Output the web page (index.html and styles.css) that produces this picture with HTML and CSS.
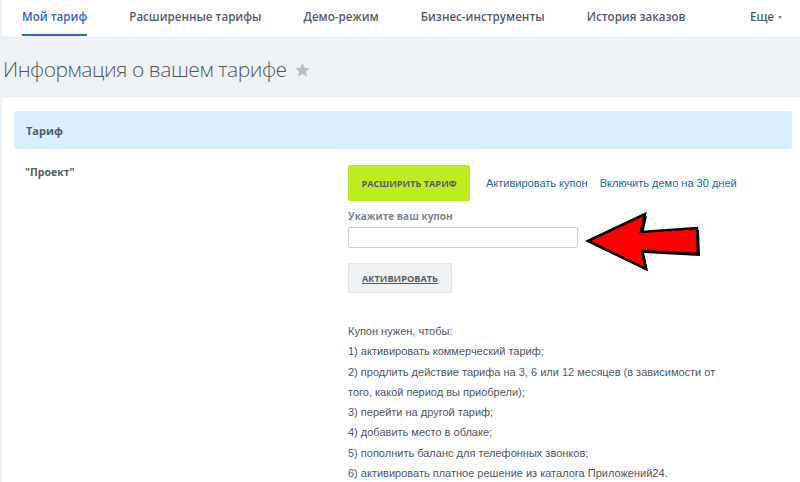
FILE: index.html
```html
<!DOCTYPE html>
<html lang="ru">
<head>
    <meta charset="UTF-8">
    <title>Информация о вашем тарифе</title>
    <link rel="stylesheet" href="styles.css">
</head>
<body>
    <div class="page">
        <div class="topnav">
            <a class="nav-item active">Мой тариф</a>
            <a class="nav-item">Расширенные тарифы</a>
            <a class="nav-item">Демо-режим</a>
            <a class="nav-item">Бизнес-инструменты</a>
            <a class="nav-item">История заказов</a>
            <a class="nav-item more">Еще <span class="caret"></span></a>
        </div>

        <div class="title-row">
            <h1 class="title">Информация о вашем тарифе</h1>
            <svg class="star" width="15" height="14" viewBox="0 0 24 23">
                <path d="M12 0l3.5 7.6 8.3.9-6.2 5.6 1.8 8.2L12 18.1l-7.4 4.2 1.8-8.2L.2 8.5l8.3-.9z" fill="#b9bfc6"/>
            </svg>
        </div>

        <div class="card">
            <div class="card-head">Тариф</div>

            <div class="tariff-row">
                <div class="tariff-name">"Проект"</div>
                <div class="tariff-actions">
                    <div class="action-line">
                        <button class="btn-extend">РАСШИРИТЬ ТАРИФ</button>
                        <a class="link">Активировать купон</a>
                        <a class="link">Включить демо на 30 дней</a>
                    </div>

                    <label class="coupon-label">Укажите ваш купон</label>
                    <div class="coupon-field">
                        <input class="coupon-input" type="text">
                        <!-- annotation arrow -->
                        <svg class="arrow" width="122" height="64" viewBox="0 0 122 64">
                            <path d="M4 30 L61 3 L57 21 L113 17 L114 43 L58 40 L62 58 Z" fill="#000" transform="translate(2 2)"/>
                            <path d="M4 30 L61 3 L57 21 L113 17 L114 43 L58 40 L62 58 Z" fill="#ff0000" stroke="#000" stroke-width="2.5" stroke-linejoin="miter"/>
                        </svg>
                    </div>

                    <button class="btn-activate">АКТИВИРОВАТЬ</button>

                    <div class="coupon-info">
                        <p>Купон нужен, чтобы:</p>
                        <p>1) активировать коммерческий тариф;</p>
                        <p>2) продлить действие тарифа на 3, 6 или 12 месяцев (в зависимости от того, какой период вы приобрели);</p>
                        <p>3) перейти на другой тариф;</p>
                        <p>4) добавить место в облаке;</p>
                        <p>5) пополнить баланс для телефонных звонков;</p>
                        <p>6) активировать платное решение из каталога Приложений24.</p>
                    </div>
                </div>
            </div>
        </div>
    </div>
</body>
</html>
```

FILE: styles.css
```css
* {
    margin: 0;
    padding: 0;
    box-sizing: border-box;
}

body {
    font-family: 'Open Sans', 'Liberation Sans', sans-serif;
    background: #eef2f4;
    color: #535c69;
    overflow: hidden;
}

.page {
    padding-left: 2px;
}

.topnav {
    background: #fff;
    height: 36px;
    display: flex;
    align-items: stretch;
    padding-left: 20px;
}

.nav-item {
    font-size: 11.6px;
    font-weight: 600;
    color: #525c69;
    display: flex;
    align-items: center;
    padding-bottom: 2px;
    margin-right: 42px;
    border-bottom: 2px solid transparent;
    white-space: nowrap;
}

.nav-item.active {
    color: #2f64d0;
    border-bottom-color: #2f64d0;
}

.nav-item.more {
    margin-left: auto;
    margin-right: 18px;
}

.caret {
    display: inline-block;
    width: 0;
    height: 0;
    border-left: 2px solid transparent;
    border-right: 2px solid transparent;
    border-top: 3px solid #7d858f;
    margin-left: 4px;
    margin-top: 2px;
}

.title-row {
    display: flex;
    align-items: center;
    height: 62px;
    padding-left: 1px;
    padding-top: 3px;
}

.title {
    font-size: 21px;
    font-weight: 300;
    color: #4f5763;
    letter-spacing: -0.45px;
}

.star {
    margin-left: 8px;
    margin-top: 3px;
}

.card {
    background: #fff;
    padding: 13px 8px 0 12px;
    min-height: 400px;
}

.card-head {
    background: #d7f0fb;
    height: 38px;
    display: flex;
    align-items: center;
    padding-left: 12px;
    font-size: 11px;
    font-weight: 700;
    color: #535c69;
    border-radius: 2px;
}

.tariff-row {
    display: flex;
    padding-top: 16px;
}

.tariff-name {
    width: 334px;
    padding-left: 11px;
    font-size: 10.5px;
    font-weight: 700;
    color: #535c69;
}

.tariff-actions {
    flex: 1;
}

.action-line {
    display: flex;
    align-items: center;
    gap: 12px;
}

.btn-extend {
    font-family: 'Open Sans', 'Liberation Sans', sans-serif;
    background: #bbed21;
    border: none;
    border-radius: 2px;
    height: 36px;
    width: 122px;
    font-size: 9.2px;
    font-weight: 700;
    color: #535c69;
    margin-right: 4px;
}

.link {
    font-family: 'Liberation Sans', Arial, sans-serif;
    font-size: 11px;
    color: #2067b0;
    white-space: nowrap;
}

.coupon-label {
    display: block;
    margin-top: 8px;
    font-size: 10px;
    font-weight: 700;
    color: #80868e;
}

.coupon-field {
    position: relative;
    margin-top: 4px;
}

.coupon-input {
    width: 230px;
    height: 21px;
    border: 1px solid #c6cdd3;
    border-radius: 2px;
    background: #fff;
    display: block;
}

.arrow {
    position: absolute;
    left: 236px;
    top: -16px;
}

.btn-activate {
    font-family: 'Open Sans', 'Liberation Sans', sans-serif;
    margin-top: 15px;
    width: 104px;
    height: 30px;
    background: #eef2f4;
    border: 1px solid #dfe3e6;
    border-radius: 2px;
    font-size: 9.2px;
    font-weight: 700;
    color: #535c69;
    text-decoration: underline;
}

.coupon-info {
    margin-top: 28px;
    width: 372px;
    font-family: 'Liberation Sans', Arial, sans-serif;
    font-size: 11px;
    line-height: 20.3px;
    color: #4f5661;
}
```
